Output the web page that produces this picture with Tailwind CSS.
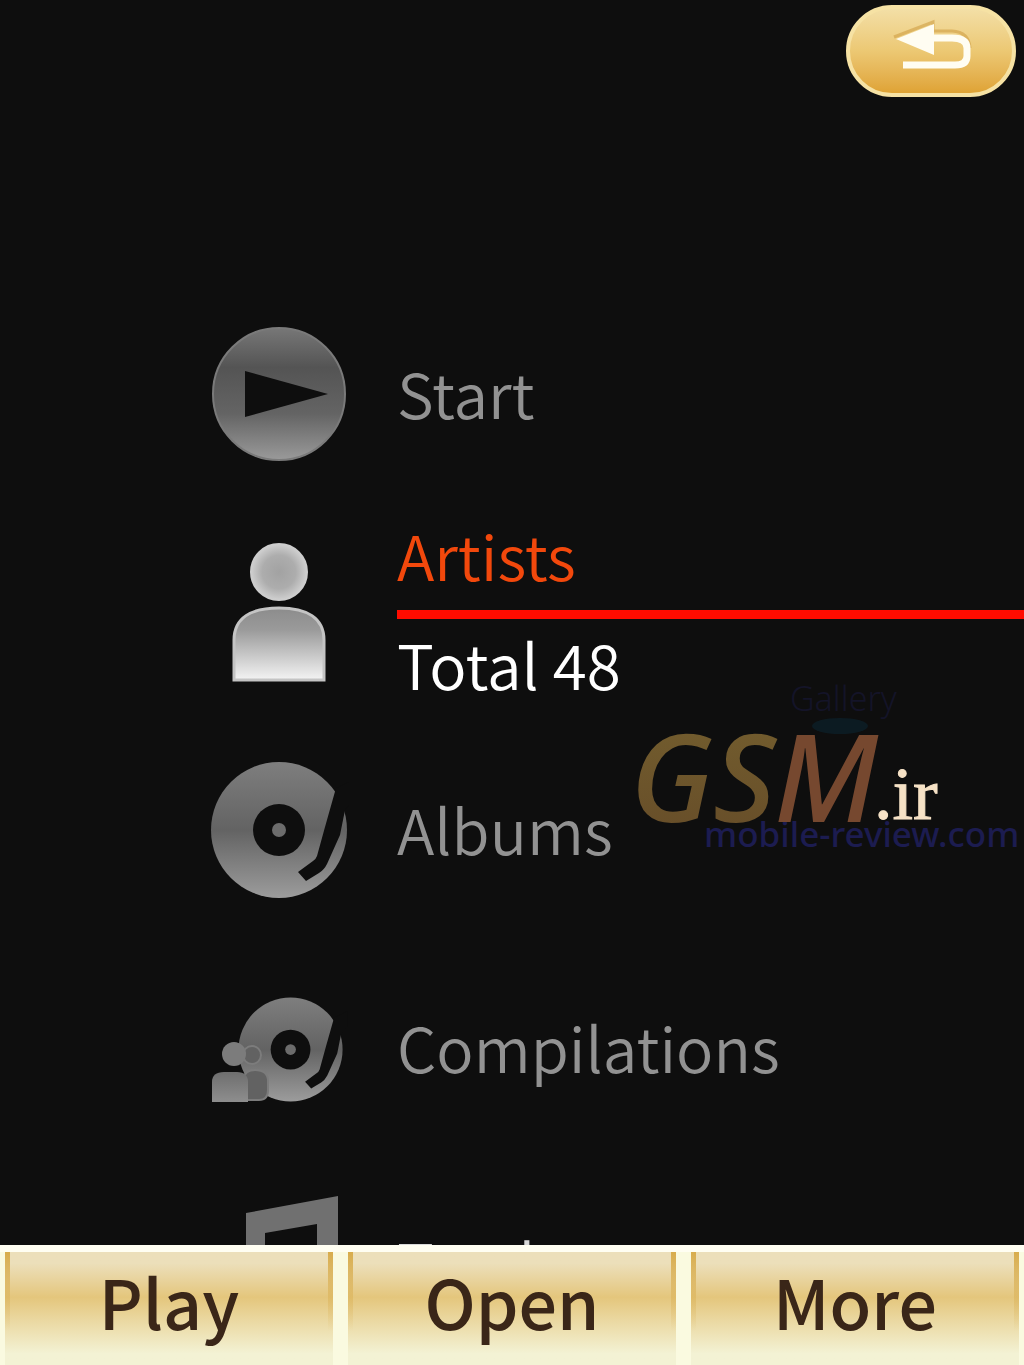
<!DOCTYPE html>
<html lang="en">
<head>
  <meta charset="UTF-8" />
  <meta name="viewport" content="width=device-width, initial-scale=1.0" />
  <script src="https://cdn.jsdelivr.net/npm/@tailwindcss/browser@4"></script>
  <title>Music</title>
</head>
<body class="relative h-screen flex flex-col overflow-hidden bg-[#0e0e0e] font-['Noto_Sans_CJK_SC','Noto_Sans',sans-serif] text-[62px] font-[350] text-[#929292]">

  <!-- Back button -->
  <header class="shrink-0 h-[285px] flex justify-end items-start pt-[5px] pr-2">
    <button type="button" aria-label="Back" class="w-[170px] h-[92px] rounded-full border-4 border-[#f6e2a4] bg-linear-to-b from-[#f3dfa6] via-[#ecc873] to-[#dfa334] flex items-center justify-center">
      <svg class="w-[162px] h-[84px]" viewBox="850 9 162 84" fill="none">
        <path d="M894 37L933 22V31H952Q969 32 970 48" stroke="#cf9f45" stroke-width="3" opacity=".6" />
        <path d="M934 38H952Q967 38 967 48V56Q967 65 955 65H903" stroke="#fffdf2" stroke-width="7" />
        <path d="M896 39L934 24V55Z" fill="#fffdf2" />
      </svg>
    </button>
  </header>

  <main class="flex-1 min-h-0 overflow-hidden">
    <ul>
      <li>
        <a href="#" class="h-[218px] flex items-center">
          <svg class="shrink-0 w-[140px] h-[140px] ml-[209px] mr-12" viewBox="0 0 140 140">
            <defs>
              <linearGradient id="play-fill" x1="0" y1="0" x2="0" y2="1">
                <stop offset="0" stop-color="#777" />
                <stop offset=".3" stop-color="#545454" />
                <stop offset=".65" stop-color="#646464" />
                <stop offset="1" stop-color="#9a9a9a" />
              </linearGradient>
            </defs>
            <circle cx="70" cy="70" r="66" fill="url(#play-fill)" stroke="#7a7a7a" stroke-width="2" />
            <path d="M36 47L119 70L36 93Z" fill="#0e0e0e" />
          </svg>
          <span class="leading-20 pb-1">Start</span>
        </a>
      </li>

      <li>
        <a href="#" aria-current="true" class="h-[218px] flex items-center">
          <svg class="shrink-0 w-[140px] h-[140px] ml-[209px] mr-12" viewBox="0 0 140 140">
            <defs>
              <radialGradient id="head-fill">
                <stop offset="0" stop-color="#a2a2a2" />
                <stop offset=".6" stop-color="#adadad" />
                <stop offset="1" stop-color="#cfcfcf" />
              </radialGradient>
              <linearGradient id="body-fill" x1="0" y1="0" x2="0" y2="1">
                <stop offset="0" stop-color="#8c8c8c" />
                <stop offset=".3" stop-color="#9a9a9a" />
                <stop offset="1" stop-color="#f4f4f4" />
              </linearGradient>
            </defs>
            <circle cx="70" cy="30" r="28" fill="url(#head-fill)" stroke="#cdcdcd" stroke-width="2" />
            <path d="M25 138V98C25 76 42 66 70 66C98 66 115 76 115 98V138Z" fill="url(#body-fill)" stroke="#c4c4c4" stroke-width="3" />
          </svg>
          <span class="flex-1 flex flex-col">
            <span class="leading-20 pb-4 border-b-9 border-[#ff0c00] text-[#f2480c]">Artists</span>
            <span class="leading-20 pt-1 pb-2 text-white">Total 48</span>
          </span>
        </a>
      </li>

      <li>
        <a href="#" class="h-[218px] flex items-center">
          <svg class="shrink-0 w-[140px] h-[140px] ml-[209px] mr-12" viewBox="0 0 140 140">
            <defs>
              <linearGradient id="disc-fill" x1="0" y1="0" x2="0" y2="1">
                <stop offset="0" stop-color="#7e7e7e" />
                <stop offset=".5" stop-color="#636363" />
                <stop offset="1" stop-color="#9c9c9c" />
              </linearGradient>
            </defs>
            <g id="disc">
              <circle cx="70" cy="70" r="68" fill="url(#disc-fill)" />
              <circle cx="70" cy="70" r="26" fill="#0e0e0e" />
              <circle cx="70" cy="70" r="7" fill="#6c6c6c" />
              <path d="M127 28L116 67L108 96Q107 99 104 101L89 112L97 121L110 113Q115 110 118 104L131 75L136 50L144 40V20Z" fill="#0e0e0e" />
            </g>
          </svg>
          <span class="leading-20 pb-1">Albums</span>
        </a>
      </li>

      <li>
        <a href="#" class="h-[218px] flex items-center">
          <svg class="shrink-0 w-[140px] h-[140px] ml-[209px] mr-12" viewBox="0 0 140 140">
            <defs>
              <linearGradient id="people-fill" x1="0" y1="0" x2="0" y2="1">
                <stop offset="0" stop-color="#6e6e6e" />
                <stop offset="1" stop-color="#8e8e8e" />
              </linearGradient>
            </defs>
            <use href="#disc" transform="translate(28 18) scale(.765)" />
            <g stroke="#7c7c7c" stroke-width="2" fill="#626262">
              <circle cx="43" cy="77" r="9" />
              <path d="M34 122V101Q36 92 46 92Q59 92 59 103V112Q59 122 50 122Z" />
            </g>
            <circle cx="25" cy="76" r="12" fill="#7c7c7c" />
            <path d="M3 124V104Q3 94 15 94H28Q39 94 39 104V124Z" fill="url(#people-fill)" />
          </svg>
          <span class="leading-20 pb-1">Compilations</span>
        </a>
      </li>

      <li>
        <a href="#" class="h-[218px] flex items-center">
          <svg class="shrink-0 w-[140px] h-[140px] ml-[209px] mr-12" viewBox="0 0 140 140">
            <path d="M37 17L129 0V110H108V28L56 37V124H37Z" fill="#707070" />
            <ellipse cx="40" cy="124" rx="18" ry="14" fill="#707070" />
            <ellipse cx="112" cy="110" rx="18" ry="14" fill="#707070" />
          </svg>
          <span class="leading-20 pb-2 text-[#d8d8d8]">Tracks</span>
        </a>
      </li>
    </ul>
  </main>

  <!-- Watermark -->
  <svg class="absolute right-0 top-[670px] w-[404px] h-[200px]" viewBox="620 670 404 200">
    <defs>
      <linearGradient id="gold" x1="0" y1="0" x2="0" y2="1">
        <stop offset="0" stop-color="#75602f" />
        <stop offset="1" stop-color="#654b28" />
      </linearGradient>
    </defs>
    <ellipse cx="840" cy="726" rx="28" ry="8" fill="#0c2530" opacity=".6" />
    <text x="790" y="711" font-family="Noto Sans" font-size="34" fill="#141428">Gallery</text>
    <text x="704" y="847" font-family="Noto Sans" font-size="35" font-weight="500" fill="#1c1c50">mobile-review.com</text>
    <text x="630" y="822" font-family="Noto Sans" font-style="italic" font-weight="500" font-size="122" fill="url(#gold)">GS</text>
    <text x="774" y="822" font-family="Noto Sans" font-style="italic" font-weight="500" font-size="122" fill="#76482f">M</text>
    <text x="874" y="819" font-family="Liberation Serif" font-size="74" stroke="#f6e2c6" fill="#f6e2c6">.ir</text>
  </svg>

  <!-- Softkeys -->
  <footer class="shrink-0 h-[120px] grid grid-cols-3 gap-x-[15px] px-[5px] border-t-7 border-[#fffef2] bg-[#fafae0] text-[68px] font-medium text-[#3a2618]">
    <button type="button" class="relative leading-20 pt-1 pb-5 bg-linear-to-b from-[#ecdfba] from-10% via-[#e4c67c] via-40% to-[#f3f2d4] to-90%">
      <span class="absolute inset-y-0 left-0 w-[5px] bg-linear-to-b from-[#d8ac4c] to-transparent to-70%"></span>
      <span class="absolute inset-y-0 right-0 w-[5px] bg-linear-to-b from-[#d8ac4c] to-transparent to-70%"></span>
      Play
    </button>
    <button type="button" class="relative leading-20 pt-1 pb-5 bg-linear-to-b from-[#ecdfba] from-10% via-[#e4c67c] via-40% to-[#f3f2d4] to-90%">
      <span class="absolute inset-y-0 left-0 w-[5px] bg-linear-to-b from-[#d8ac4c] to-transparent to-70%"></span>
      <span class="absolute inset-y-0 right-0 w-[5px] bg-linear-to-b from-[#d8ac4c] to-transparent to-70%"></span>
      Open
    </button>
    <button type="button" class="relative leading-20 pt-1 pb-5 bg-linear-to-b from-[#ecdfba] from-10% via-[#e4c67c] via-40% to-[#f3f2d4] to-90%">
      <span class="absolute inset-y-0 left-0 w-[5px] bg-linear-to-b from-[#d8ac4c] to-transparent to-70%"></span>
      <span class="absolute inset-y-0 right-0 w-[5px] bg-linear-to-b from-[#d8ac4c] to-transparent to-70%"></span>
      More
    </button>
  </footer>
</body>
</html>
